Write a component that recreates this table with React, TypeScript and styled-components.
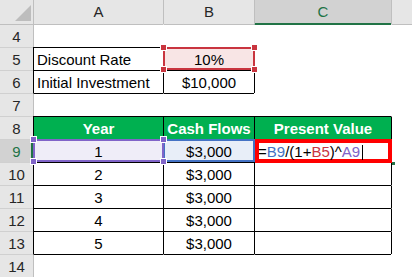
import { Fragment } from 'react';
import styled, { createGlobalStyle } from 'styled-components';

const BLACK = '#000';
const HEAD_LINE = '#bfbfbf';
const SEP = '#d0d0d0';
const ACTIVE = '#217346';
const RED = '#c9353f';
const BLUE = '#4472c4';
const PURPLE = '#8064c8';
const GREEN = '#00b050';

const GlobalStyle = createGlobalStyle`
  body {
    margin: 0;
    background: #fff;
    font-family: "Liberation Sans", Arial, sans-serif;
    font-size: 15px;
  }
`;

const Sheet = styled.div`
  display: grid;
  grid-template-columns: 33px 130px 91px 137px 1fr;
  grid-template-rows: 24px repeat(11, 23px);
  width: 412px;
  overflow: hidden;
`;

const Corner = styled.div`
  position: relative;
  background: #e6e6e6;

  &::after {
    content: '';
    position: absolute;
    right: 2px;
    bottom: 3px;
    width: 16px;
    height: 16px;
    background: #bdbdbd;
    clip-path: polygon(100% 0, 100% 100%, 0 100%);
  }
`;

const ColHead = styled.div<{ $active?: boolean }>`
  box-sizing: border-box;
  border-left: 1px solid ${HEAD_LINE};
  background: ${(p) => (p.$active ? '#d2d2d2' : '#e6e6e6')};
  box-shadow: ${(p) => (p.$active ? `inset 0 -1px 0 ${ACTIVE}` : 'none')};
  color: ${(p) => (p.$active ? ACTIVE : '#262626')};
  text-align: center;
  line-height: 24px;
`;

const RowHead = styled.div<{ $active?: boolean; $first?: boolean }>`
  box-sizing: border-box;
  border-top: 1px solid ${(p) => (p.$first ? HEAD_LINE : SEP)};
  background: ${(p) => (p.$active ? '#d2d2d2' : '#e6e6e6')};
  box-shadow: ${(p) => (p.$active ? `inset -2px 0 0 ${ACTIVE}` : 'none')};
  color: ${(p) => (p.$active ? ACTIVE : '#262626')};
  text-align: center;
  padding-top: 1px;
  line-height: 21px;
`;

interface CellProps {
  $top?: string;
  $left?: string;
  $bg?: string;
  $align?: 'left' | 'center';
  $bold?: boolean;
  $color?: string;
}

const Cell = styled.div<CellProps>`
  position: relative;
  box-sizing: border-box;
  border-top: 1px solid ${(p) => p.$top || 'transparent'};
  border-left: 1px solid ${(p) => p.$left || 'transparent'};
  background: ${(p) => p.$bg || 'transparent'};
  padding: 1px 3px 0;
  line-height: 21px;
  text-align: ${(p) => p.$align || 'left'};
  font-weight: ${(p) => (p.$bold ? 700 : 400)};
  color: ${(p) => p.$color || '#000'};
  white-space: nowrap;
`;

const RefBox = styled.div<{ $color: string; $z: number }>`
  position: absolute;
  top: -1px;
  left: -1px;
  right: -1px;
  bottom: 0;
  border: 2px solid ${(p) => p.$color};
  z-index: ${(p) => p.$z};
  pointer-events: none;
`;

const ActiveBox = styled.div`
  position: absolute;
  top: -1px;
  left: 0;
  right: -1px;
  bottom: -1px;
  border: 4px solid #ff0000;
  z-index: 3;
`;

const FillHandle = styled.span`
  position: absolute;
  right: -7px;
  bottom: -6px;
  width: 3px;
  height: 3px;
  background: ${ACTIVE};
`;

type Pos = 'tl' | 'tr' | 'bl' | 'br';

const Handle = styled.span<{ $pos: Pos; $color: string }>`
  position: absolute;
  width: 5px;
  height: 5px;
  border: 1px solid #fff;
  background: ${(p) => p.$color};
  ${(p) => (p.$pos[0] === 't' ? 'top: -5px;' : 'bottom: -5px;')}
  ${(p) => (p.$pos[1] === 'l' ? 'left: -5px;' : 'right: -5px;')}
`;

const Formula = styled.span`
  position: relative;
  z-index: 4;
`;

const Ref = styled.span<{ $c: string }>`
  color: ${(p) => p.$c};
`;

const Caret = styled.span`
  display: inline-block;
  width: 1px;
  height: 15px;
  margin-left: 2px;
  background: #000;
  vertical-align: -3px;
`;

function Handles({ color }: { color: string }) {
  return (
    <>
      {(['tl', 'tr', 'bl', 'br'] as Pos[]).map((pos) => (
        <Handle key={pos} $pos={pos} $color={color} />
      ))}
    </>
  );
}

const flows = [1, 2, 3, 4, 5];

export default function App() {
  return (
    <>
      <GlobalStyle />
      <Sheet>
        <Corner />
        <ColHead>A</ColHead>
        <ColHead>B</ColHead>
        <ColHead $active>C</ColHead>
        <ColHead />

        <RowHead $first>4</RowHead>
        <Cell $top={HEAD_LINE} $left={HEAD_LINE} />
        <Cell $top={HEAD_LINE} />
        <Cell $top={ACTIVE} />
        <Cell $top={HEAD_LINE} />

        <RowHead>5</RowHead>
        <Cell $top={BLACK} $left={BLACK}>Discount Rate</Cell>
        <Cell $top={BLACK} $left={BLACK} $align="center" $bg="#f8e5e5">
          <RefBox $color={RED} $z={1}>
            <Handles color={RED} />
          </RefBox>
          10%
        </Cell>
        <Cell $left={BLACK} />
        <Cell />

        <RowHead>6</RowHead>
        <Cell $top={BLACK} $left={BLACK}>Initial Investment</Cell>
        <Cell $top={BLACK} $left={BLACK} $align="center">$10,000</Cell>
        <Cell $left={BLACK} />
        <Cell />

        <RowHead>7</RowHead>
        <Cell $top={BLACK} $left={HEAD_LINE} />
        <Cell $top={BLACK} />
        <Cell />
        <Cell />

        <RowHead>8</RowHead>
        <Cell $top={BLACK} $left={BLACK} $bg={GREEN} $align="center" $bold $color="#fff">Year</Cell>
        <Cell $top={BLACK} $left={BLACK} $bg={GREEN} $align="center" $bold $color="#fff">Cash Flows</Cell>
        <Cell $top={BLACK} $left={BLACK} $bg={GREEN} $align="center" $bold $color="#fff">Present Value</Cell>
        <Cell $left={BLACK} />

        {flows.map((year) => {
          const active = year === 1;
          return (
            <Fragment key={year}>
              <RowHead $active={active}>{year + 8}</RowHead>
              <Cell $top={BLACK} $left={BLACK} $align="center" $bg={active ? '#efedf8' : undefined}>
                {active && (
                  <RefBox $color={PURPLE} $z={2}>
                    <Handles color={PURPLE} />
                  </RefBox>
                )}
                {year}
              </Cell>
              <Cell $top={BLACK} $left={BLACK} $align="center" $bg={active ? '#e8eef8' : undefined}>
                {active && <RefBox $color={BLUE} $z={1} />}
                $3,000
              </Cell>
              <Cell $top={BLACK} $left={BLACK}>
                {active && (
                  <>
                    <ActiveBox>
                      <FillHandle />
                    </ActiveBox>
                    <Formula>
                      =<Ref $c={BLUE}>B9</Ref>/(1+<Ref $c={RED}>B5</Ref>)^<Ref $c={PURPLE}>A9</Ref>
                      <Caret />
                    </Formula>
                  </>
                )}
              </Cell>
              <Cell $left={BLACK} />
            </Fragment>
          );
        })}

        <RowHead>14</RowHead>
        <Cell $top={BLACK} $left={HEAD_LINE} />
        <Cell $top={BLACK} />
        <Cell $top={BLACK} />
        <Cell />
      </Sheet>
    </>
  );
}
